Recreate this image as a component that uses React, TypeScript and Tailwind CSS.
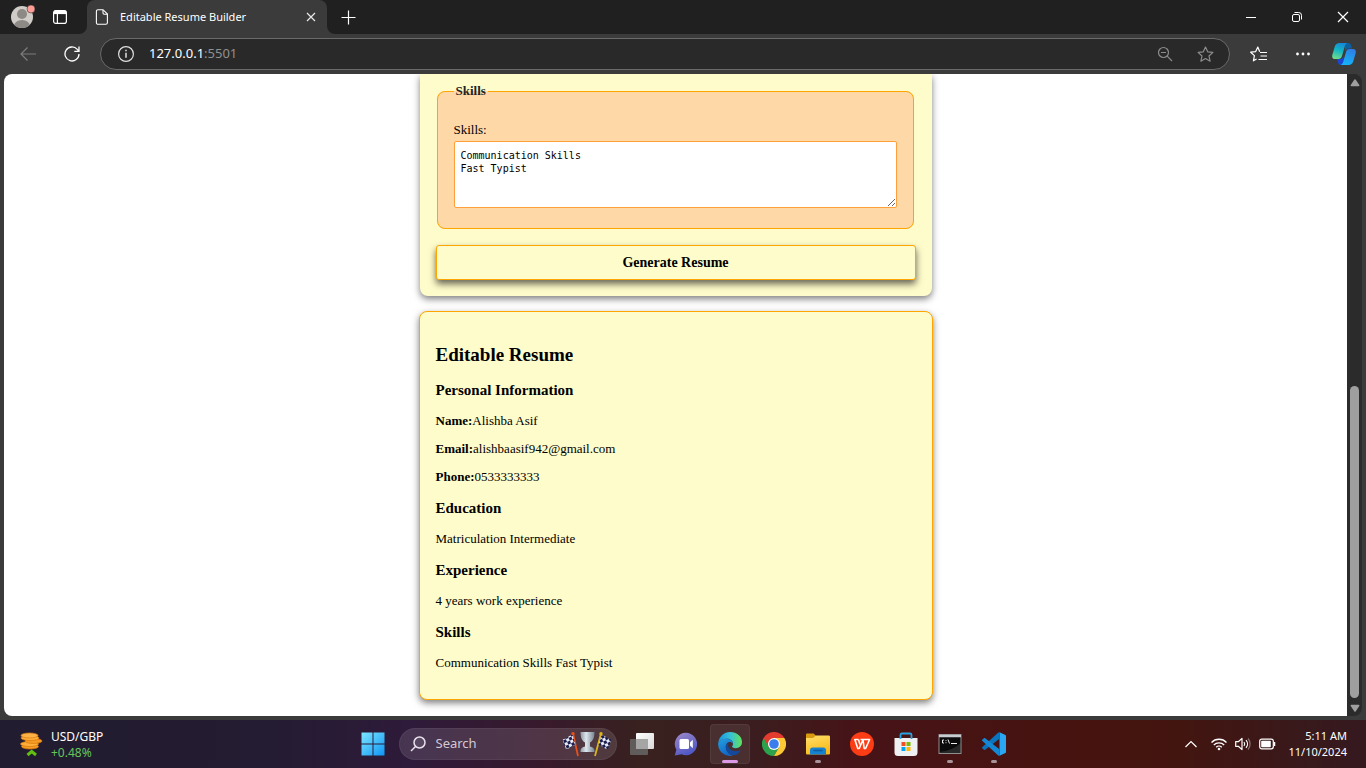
import type { ReactNode } from 'react';

const resumeShadow = 'shadow-[0_3px_7px_rgba(0,0,0,0.5)]';

function Avatar() {
  return (
    <svg width="24" height="24" viewBox="0 0 24 24">
      <circle cx="11" cy="13" r="11" fill="#d0cdc8" />
      <clipPath id="avatar">
        <circle cx="11" cy="13" r="11" />
      </clipPath>
      <g clipPath="url(#avatar)">
        <circle cx="11" cy="10" r="5" fill="#8d8984" />
        <ellipse cx="11" cy="22" rx="8" ry="6" fill="#8d8984" />
      </g>
      <circle cx="20" cy="5" r="4" fill="#ff9d97" stroke="#202020" strokeWidth="0.5" />
    </svg>
  );
}

function TabFlare({ side }: { side: 'left' | 'right' }) {
  return (
    <svg
      width="8"
      height="8"
      viewBox="0 0 8 8"
      className={side === 'left' ? 'absolute bottom-0 -left-2' : 'absolute bottom-0 -right-2'}
    >
      <path d={side === 'left' ? 'M8 0v8H0a8 8 0 0 0 8-8z' : 'M0 0v8h8a8 8 0 0 1-8-8z'} fill="#3b3b3b" />
    </svg>
  );
}

function TitleBar() {
  return (
    <header className="flex h-[34px] shrink-0 items-center bg-[#202020] text-white">
      <button aria-label="Profile" className="ml-[11px] flex h-8 w-6 items-start pt-[3px]">
        <Avatar />
      </button>
      <button aria-label="Tab actions" className="ml-[17px] flex h-8 w-4 items-center justify-center">
        <svg width="16" height="16" viewBox="0 0 16 16" fill="none" stroke="#fff" strokeWidth="1.2">
          <rect x="1.6" y="1.6" width="12.8" height="12.8" rx="2.2" />
          <path d="M2 3.4h12" strokeWidth="3.4" />
          <path d="M5.4 5v9.4" />
        </svg>
      </button>
      <div className="relative ml-[19px] flex h-full w-60 items-center rounded-t-lg bg-[#3b3b3b] pl-2 pr-2">
        <TabFlare side="left" />
        <svg width="14" height="16" viewBox="0 0 14 16" fill="none" stroke="#fff" strokeWidth="1.1">
          <path d="M3 .7h5l4.4 4.4v8.6c0 1-.7 1.6-1.6 1.6H3c-.9 0-1.6-.7-1.6-1.6V2.3C1.4 1.4 2.1.7 3 .7z" />
          <path d="M8 .9v3.2c0 .8.4 1.2 1.2 1.2h3.2" />
        </svg>
        <span className="ml-[11px] grow font-['Noto_Sans','Open_Sans',sans-serif] text-[11px] whitespace-nowrap">
          Editable Resume Builder
        </span>
        <button aria-label="Close tab" className="flex size-4 items-center justify-center">
          <svg width="10" height="10" viewBox="0 0 10 10" stroke="#e8e8e8" strokeWidth="1.2">
            <path d="M1 1l8 8M9 1l-8 8" />
          </svg>
        </button>
        <TabFlare side="right" />
      </div>
      <button aria-label="New tab" className="ml-[13px] flex size-4 items-center justify-center">
        <svg width="16" height="16" viewBox="0 0 16 16" stroke="#fff" strokeWidth="1.2">
          <path d="M8.5 1.500v14M1.500 8.500h14" />
        </svg>
      </button>
      <div className="ml-auto flex h-full">
        <button aria-label="Minimize" className="flex w-[46px] items-center justify-center">
          <svg width="10" height="10" viewBox="0 0 10 10" stroke="#fff">
            <path d="M0 5.500h10" />
          </svg>
        </button>
        <button aria-label="Restore" className="flex w-[46px] items-center justify-center">
          <svg width="12" height="12" viewBox="0 0 12 12" fill="none" stroke="#fff">
            <rect x="1.500" y="3.500" width="7" height="7" rx="1.500" />
            <path d="M3.500 1.500h4.200a2.800 2.800 0 0 1 2.800 2.800v4.200" />
          </svg>
        </button>
        <button aria-label="Close window" className="flex w-[46px] items-center justify-center">
          <svg width="12" height="12" viewBox="0 0 12 12" stroke="#fff" strokeWidth="1.200">
            <path d="M1 1l10 10M11 1L1 11" />
          </svg>
        </button>
      </div>
    </header>
  );
}

const starPath = 'M8.500 1l2.200 4.800 5.200.600-3.900 3.600 1.100 5.200-4.600-2.600-4.600 2.600 1.100-5.200L1.100 6.400l5.200-.600z';

function Copilot() {
  return (
    <svg width="24" height="24" viewBox="0 0 24 24">
      <defs>
        <linearGradient id="cpA" x1="0.6" y1="0" x2="0.3" y2="1">
          <stop offset="0" stopColor="#1687d9" />
          <stop offset="0.45" stopColor="#12b4c4" />
          <stop offset="1" stopColor="#6fdc8c" />
        </linearGradient>
        <linearGradient id="cpB" x1="0.6" y1="0" x2="0.3" y2="1">
          <stop offset="0" stopColor="#2f7fe6" />
          <stop offset="1" stopColor="#12b5f8" />
        </linearGradient>
      </defs>
      <path d="M12 1h4.500c1.500 0 2.300 1 2.700 2.400L20 6.500h-3c-2 0-3 1-3.600 3z" fill="#0d5f9e" />
      <path d="M12 23H8.500c-1.500 0-2.200-1-2.500-2.200L5 17h3.500c1.500 0 2.400-1 3-3z" fill="#1b46d4" />
      <path d="M7.500 1h8c-1.600.3-2.300 1.600-2.800 3.400L10 14c-.6 2-1.700 3-3.500 3H3C.8 17-.2 15.400.3 13L2.800 4.500C3.500 2.200 5 1 7.500 1z" fill="url(#cpA)" />
      <path d="M16.500 23h-8c1.600-.3 2.300-1.600 2.800-3.400L14 10c.6-2 1.700-3 3.500-3H21c2.200 0 3.200 1.600 2.700 4l-2.500 8.500c-.7 2.300-2.200 3.500-4.700 3.500z" fill="url(#cpB)" />
    </svg>
  );
}

function Toolbar() {
  return (
    <nav className="flex h-10 shrink-0 items-center bg-[#3b3b3b]">
      <button aria-label="Back" className="ml-5 flex size-4 items-center justify-center">
        <svg width="16" height="16" viewBox="0 0 16 16" fill="none" stroke="#7c7c7c" strokeWidth="1.200">
          <path d="M16 8H1M7.500 1.500L1 8l6.500 6.500" />
        </svg>
      </button>
      <button aria-label="Reload" className="ml-7 flex size-4 items-center justify-center">
        <svg width="16" height="16" viewBox="0 0 16 16" fill="none" stroke="#fff" strokeWidth="1.300">
          <path d="M15 8a7 7 0 1 1-1.700-4.600L15 5.200M15 .6v4.700h-4.700" />
        </svg>
      </button>
      <div className="ml-5 flex h-8 grow items-center rounded-full border border-[#6a6a6a] bg-[#292929] pr-[15px] pl-4">
        <svg width="18" height="18" viewBox="0 0 18 18" fill="none" stroke="#e0e0e0" strokeWidth="1.200">
          <circle cx="9" cy="9" r="7.400" />
          <path d="M9 7.800v5" strokeWidth="1.500" />
          <path d="M9 4.800v1.500" strokeWidth="1.500" />
        </svg>
        <a
          href="#resume"
          className="ml-[14px] font-['Noto_Sans','Open_Sans',sans-serif] text-[13px] text-[#909090]"
        >
          <span className="text-white">127.0.0.1</span>:5501
        </a>
        <button aria-label="Zoom" className="ml-auto flex size-4 items-center justify-center">
          <svg width="16" height="16" viewBox="0 0 16 16" fill="none" stroke="#8c8c8c" strokeWidth="1.200">
            <circle cx="6.500" cy="6.500" r="5" />
            <path d="M10.200 10.200L15 15M4 6.500h5" />
          </svg>
        </button>
        <button aria-label="Add to favorites" className="ml-6 flex size-[17px] items-center justify-center">
          <svg width="17" height="17" viewBox="0 0 17 17" fill="none" stroke="#8c8c8c" strokeWidth="1.200" strokeLinejoin="round">
            <path d={starPath} />
          </svg>
        </button>
      </div>
      <button aria-label="Favorites" className="ml-5 flex h-4 w-[17px] items-center justify-center">
        <svg width="17" height="17" viewBox="0 0 17 17" fill="none" stroke="#fff" strokeWidth="1.200" strokeLinejoin="round">
          <path d="M9.700 5.800L7.800 1 5.700 5.600.7 6.200l3.700 3.400-1 5.200 3.200-1.800M10 6.500h7M10.500 10h6.500M8.500 13.500H17" />
        </svg>
      </button>
      <button aria-label="Settings and more" className="ml-7 flex size-4 items-center justify-center">
        <svg width="16" height="4" viewBox="0 0 16 4" fill="#fff">
          <circle cx="2.500" cy="2" r="1.400" />
          <circle cx="8" cy="2" r="1.400" />
          <circle cx="13.500" cy="2" r="1.400" />
        </svg>
      </button>
      <button aria-label="Copilot" className="mr-[10px] ml-[21px] flex size-6 items-center justify-center">
        <Copilot />
      </button>
    </nav>
  );
}

function SkillsForm() {
  return (
    <form
      className={`w-full max-w-[512px] rounded-b-lg bg-[#fffccb] px-4 pt-[9px] pb-4 ${resumeShadow}`}
      onSubmit={(e) => e.preventDefault()}
    >
      <fieldset className="mr-0.5 ml-px rounded-lg border border-[#ffa500] bg-[#ffd8a8] px-4 pb-5">
        <legend className="px-[2px] text-[13px] leading-4 font-bold text-[#222]">Skills</legend>
        <label htmlFor="skills" className="mt-[23px] block text-[13px] leading-4">
          Skills:
        </label>
        <textarea
          id="skills"
          defaultValue={'Communication Skills\nFast Typist'}
          className="mt-[3px] block h-[67px] w-full resize rounded-xs border border-[#ffa03c] bg-white px-[6px] py-[7px] font-['DejaVu_Sans_Mono',monospace] text-[10px] leading-[13px]"
        />
      </fieldset>
      <button
        type="submit"
        className="mt-4 block h-[35px] w-full rounded-[3px] border border-[#ffa500] bg-[#fffccb] text-[14px] font-bold shadow-[0_4px_7px_rgba(0,0,0,0.6)]"
      >
        Generate Resume
      </button>
    </form>
  );
}

function Heading({ children }: { children: ReactNode }) {
  return <h3 className="my-[14px] text-[15px] leading-[18px] font-bold">{children}</h3>;
}

function Line({ label, children }: { label?: string; children: ReactNode }) {
  return (
    <p className="my-3 text-[13px] leading-4">
      {label && <strong>{label}</strong>}
      {children}
    </p>
  );
}

function Resume() {
  return (
    <section
      id="resume"
      className={`mt-[15px] w-full max-w-[514px] rounded-lg border border-[#ffa500] bg-[#fffccb] px-4 pt-[31px] pb-4 ${resumeShadow}`}
    >
      <h2 className="text-[19px] leading-6 font-bold">Editable Resume</h2>
      <Heading>Personal Information</Heading>
      <Line label="Name:">Alishba Asif</Line>
      <Line label="Email:">alishbaasif942@gmail.com</Line>
      <Line label="Phone:">0533333333</Line>
      <Heading>Education</Heading>
      <Line>Matriculation Intermediate</Line>
      <Heading>Experience</Heading>
      <Line>4 years work experience</Line>
      <Heading>Skills</Heading>
      <Line>Communication Skills Fast Typist</Line>
    </section>
  );
}

function ScrollBar() {
  return (
    <div className="flex w-[15px] shrink-0 flex-col items-center bg-[#2b2b2b] pt-[5px] pb-1">
      <svg width="10" height="8" viewBox="0 0 10 8" fill="#9f9f9f">
        <path d="M4.200.7a1 1 0 0 1 1.600 0L9.300 6c.4.700 0 1.300-.8 1.300h-7C.7 7.300.300 6.700.7 6z" />
      </svg>
      <div className="flex w-full grow flex-col items-center justify-end pb-[6px]">
        <div className="h-[51%] w-[9px] rounded-full bg-[#9f9f9f]" />
      </div>
      <svg width="10" height="8" viewBox="0 0 10 8" fill="#9f9f9f">
        <path d="M4.200 7.300a1 1 0 0 0 1.600 0L9.300 2c.4-.7 0-1.300-.8-1.300h-7C.7.7.300 1.300.7 2z" />
      </svg>
    </div>
  );
}

function Trophy() {
  return (
    <svg className="shrink-0" width="50" height="26" viewBox="0 0 50 26">
      <defs>
        <linearGradient id="cup" x1="0" x2="1">
          <stop offset="0" stopColor="#8b98a5" />
          <stop offset="0.4" stopColor="#dfe7ee" />
          <stop offset="1" stopColor="#75828f" />
        </linearGradient>
        <pattern id="check" width="6" height="6" patternUnits="userSpaceOnUse" patternTransform="rotate(-25)">
          <rect width="6" height="6" fill="#e9eaf3" />
          <rect width="3" height="3" fill="#1b2050" />
          <rect x="3" y="3" width="3" height="3" fill="#1b2050" />
        </pattern>
      </defs>
      <path d="M18.500 1h14c0 5-1 8.500-4.500 10.500v4c2.500.5 4 1.500 4.500 3.500v2h-14v-2c.5-2 2-3 4.500-3.500v-4C19.500 9.500 18.500 6 18.500 1z" fill="url(#cup)" />
      <path d="M11 2.500L16 25" stroke="#e8501c" strokeWidth="1.800" />
      <circle cx="11" cy="2.800" r="1.700" fill="#e8501c" />
      <path d="M10.500 4c-3 0-4.500 3-10 4.500L4 18c5-.5 6-4 9.500-4z" fill="url(#check)" />
      <path d="M39 2.500L33 25" stroke="#d9b41c" strokeWidth="1.800" />
      <circle cx="39" cy="2.800" r="1.700" fill="#d9b41c" />
      <path d="M39.500 4c3 0 4.500 3 10 4.500L46 18c-5-.5-6-4-9.500-4z" fill="url(#check)" />
    </svg>
  );
}

function TaskView() {
  return (
    <svg width="24" height="24" viewBox="0 0 24 24">
      <defs>
        <linearGradient id="tv" x2="1" y2="1">
          <stop stopColor="#fff" />
          <stop offset="1" stopColor="#d9d9d9" />
        </linearGradient>
      </defs>
      <rect x="6" y="1" width="18" height="16" rx="1" fill="url(#tv)" />
      <rect x="0" y="7" width="18" height="16" rx="1" fill="#6b6b6b" fillOpacity="0.8" />
      <path d="M6 7h12v10H6z" fill="#a5a5a5" />
    </svg>
  );
}

function Chat() {
  return (
    <svg width="24" height="24" viewBox="0 0 24 24">
      <defs>
        <linearGradient id="chat" x1="0.2" y1="0" x2="0.7" y2="1">
          <stop stopColor="#9a86c8" />
          <stop offset="1" stopColor="#4954c4" />
        </linearGradient>
      </defs>
      <path d="M12 .8a11.200 11.200 0 1 1-4.500 21.500L.8 23.500l1.600-5.800A11.200 11.200 0 0 1 12 .8z" fill="url(#chat)" />
      <rect x="5.500" y="7" width="9.500" height="10" rx="1.500" fill="#fff" />
      <path d="M16 10.500l2.800-2.800v8.600L16 13.500z" fill="#fff" />
    </svg>
  );
}

function Edge() {
  return (
    <svg width="24" height="24" viewBox="0 0 24 24">
      <defs>
        <linearGradient id="edgeA" x1="0" y1="0.3" x2="1" y2="0.3">
          <stop stopColor="#1a93da" />
          <stop offset="0.5" stopColor="#35c1d8" />
          <stop offset="1" stopColor="#62e25a" />
        </linearGradient>
        <linearGradient id="edgeB" x1="0" y1="0" x2="0.4" y2="1">
          <stop stopColor="#249fe0" />
          <stop offset="1" stopColor="#1168c6" />
        </linearGradient>
      </defs>
      <path d="M.2 11C1 4.500 6 0 12.200 0 19 0 24 4.500 24 10c0 4-3 6.200-6.200 6.200-2.800 0-3.800-.9-3.800-1.600 0-.6 1-1 1-2.900 0-2.500-2.400-4.900-6-4.900C4.500 6.800 1.400 8.800.2 11z" fill="url(#edgeA)" />
      <path d="M.1 12C.6 8.500 4.500 6.800 8.500 6.800c3.600 0 6.500 2.200 6.500 4.900-1-1.400-2.500-1.900-4-1.600-2 .5-3.500 2.800-3.200 5.500.4 4 3.400 7.200 7 8A12 12 0 0 1 .1 12z" fill="url(#edgeB)" />
      <path d="M10.500 10.200c-2 .8-3 3-2.700 5.400.5 4.500 4.400 8.400 9 7.500 2.400-.8 4.400-2.300 5.600-4.200.3-.5-.1-.9-.6-.6-4.300 2.200-10.800.3-11.600-4.300-.2-1.400 0-2.700.3-3.800z" fill="#12499c" />
    </svg>
  );
}

function Chrome() {
  return (
    <svg width="24" height="24" viewBox="0 0 24 24">
      <path d="M12 12L1.600 6A12 12 0 0 0 12 24l5.200-9z" fill="#2ba24c" />
      <path d="M12 12l5.200 3L12 24a12 12 0 0 0 10.400-18H12z" fill="#fcc934" />
      <path d="M1.600 6A12 12 0 0 1 22.400 6H12v6l-5.200 3z" fill="#e33b2e" />
      <circle cx="12" cy="12" r="6" fill="#fff" />
      <circle cx="12" cy="12" r="4.800" fill="#3b7ded" />
    </svg>
  );
}

function Explorer() {
  return (
    <svg width="24" height="24" viewBox="0 0 24 24">
      <defs>
        <linearGradient id="fold" x2="0.4" y2="1">
          <stop stopColor="#ffe06e" />
          <stop offset="1" stopColor="#f9bb18" />
        </linearGradient>
      </defs>
      <path d="M0 2.500C0 1.700.6 1.500 1.400 1.500h6.200L10 3.800V7H0z" fill="#d99a10" />
      <path d="M0 6h7l3-2.500h12.500c1 0 1.500.5 1.500 1.500v16c0 1-.500 1.500-1.500 1.500h-21C.5 22.500 0 22 0 21z" fill="url(#fold)" />
      <path d="M4 22.500v-4.500c0-1.500 1-2.500 2.500-2.500h11c1.500 0 2.500 1 2.500 2.500v4.500z" fill="#1682d0" />
      <path d="M8 18.500h8" stroke="#0e5e9f" strokeWidth="1.500" strokeLinecap="round" />
    </svg>
  );
}

function Wps() {
  return (
    <svg width="24" height="24" viewBox="0 0 24 24">
      <circle cx="12" cy="12" r="12" fill="#fb3c14" />
      <path
        d="M8.500 7.500H4.800l3 9h1.400L13 7.800l1.200 8.700h1.400l4-9h-9.100"
        fill="none"
        stroke="#fff"
        strokeWidth="1.600"
        strokeLinejoin="round"
      />
      <path d="M8.500 7.500l1.500 5" stroke="#fff" strokeWidth="1.600" />
    </svg>
  );
}

function Store() {
  return (
    <svg width="24" height="24" viewBox="0 0 24 24">
      <path d="M.5 6h23v14.500a3.500 3.500 0 0 1-3.500 3.500H4A3.500 3.500 0 0 1 .5 20.500z" fill="#eef0f2" />
      <path d="M6.500 7V3c0-1 .5-1.500 1.500-1.500h8c1 0 1.500.5 1.500 1.500v4" fill="none" stroke="#27a3e2" strokeWidth="1.800" />
      <path d="M7.500 10h4v4h-4z" fill="#f25022" />
      <path d="M12.500 10h4v4h-4z" fill="#7fba00" />
      <path d="M7.500 15h4v4h-4z" fill="#00a4ef" />
      <path d="M12.500 15h4v4h-4z" fill="#ffb900" />
    </svg>
  );
}

function Terminal() {
  return (
    <svg width="24" height="24" viewBox="0 0 24 24">
      <rect x="1" y="2.500" width="22" height="19" fill="#0b0b0b" stroke="#8e8e8e" />
      <path d="M1 4h22" stroke="#c9ccd0" strokeWidth="2.500" />
      <path d="M6 8H4.500v3H6M8 8.200v.9M8 10.300v.9M10 7.500l1.500 4M13 11.500h6" fill="none" stroke="#ececec" />
      <path d="M1.500 20C10 19 18 16 22.500 11v10h-21z" fill="#fff" fillOpacity="0.12" />
    </svg>
  );
}

function VsCode() {
  return (
    <svg width="24" height="24" viewBox="0 0 24 24">
      <path d="M17.500.2L23.400 3c.4.200.6.500.6 1v16c0 .5-.2.800-.6 1l-5.900 2.800z" fill="#2aa7f2" />
      <path d="M17.500.2v6.600L3.200 17.800c-.4.300-.8.300-1.200 0L.4 16.400c-.5-.5-.5-1 0-1.500L16 .7c.4-.4 1-.6 1.500-.5z" fill="#0a74bd" />
      <path d="M17.500 23.800v-6.600L3.200 6.200c-.4-.3-.8-.3-1.200 0L.4 7.600c-.5.500-.5 1 0 1.500L16 23.300c.4.400 1 .6 1.500.5z" fill="#1588d4" />
    </svg>
  );
}

type App = { name: string; icon: ReactNode; state?: 'active' | 'open' };

const apps: App[] = [
  { name: 'Task view', icon: <TaskView /> },
  { name: 'Chat', icon: <Chat /> },
  { name: 'Microsoft Edge', icon: <Edge />, state: 'active' },
  { name: 'Google Chrome', icon: <Chrome /> },
  { name: 'File Explorer', icon: <Explorer />, state: 'open' },
  { name: 'WPS Office', icon: <Wps /> },
  { name: 'Microsoft Store', icon: <Store /> },
  { name: 'Command Prompt', icon: <Terminal />, state: 'open' },
  { name: 'Visual Studio Code', icon: <VsCode />, state: 'open' },
];

function AppButton({ name, icon, state }: App) {
  return (
    <button aria-label={name} className="flex h-12 w-11 items-center justify-center">
      <span
        className={
          state === 'active'
            ? 'relative flex size-10 items-center justify-center rounded-sm border border-white/5 bg-white/8'
            : 'relative flex size-10 items-center justify-center'
        }
      >
        {icon}
        {state === 'active' && <span className="absolute bottom-0 h-[3px] w-4 rounded-full bg-[#dc9ae6]" />}
        {state === 'open' && <span className="absolute bottom-px h-[3px] w-[6px] rounded-full bg-[#a89498]" />}
      </span>
    </button>
  );
}

function Taskbar() {
  return (
    <footer className="grid h-12 shrink-0 grid-cols-[1fr_auto_1fr] items-center bg-[linear-gradient(90deg,#211c30_0%,#241c32_20%,#2e1a3a_30%,#381a2c_40%,#38211f_47%,#3b1d1f_55%,#471317_63%,#46130f_80%,#43150f_86%,#38191c_96%,#35191f_100%)] font-['Noto_Sans','Open_Sans',sans-serif] text-white">
      <button className="ml-5 flex items-center gap-2 justify-self-start pt-px text-left text-xs leading-4">
        <svg width="23" height="26" viewBox="0 0 23 26">
          <g stroke="#d97a0c" strokeWidth="0.700">
            <ellipse cx="10" cy="14.500" rx="8.500" ry="2.500" fill="#f59a23" />
            <ellipse cx="9.500" cy="12" rx="9" ry="2.500" fill="#ffae3b" />
            <ellipse cx="13.500" cy="9" rx="8.500" ry="2.500" fill="#f59a23" />
            <ellipse cx="10" cy="6" rx="9" ry="2.500" fill="#ffae3b" />
            <ellipse cx="9.500" cy="3.500" rx="8.500" ry="2.500" fill="#ffb347" />
          </g>
          <path d="M7.500 23l4.200-3.500L16 23" fill="none" stroke="#62bf12" strokeWidth="3" />
        </svg>
        <span>
          <span className="block">USD/GBP</span>
          <span className="block text-[#67c45b]">+0.48%</span>
        </span>
      </button>
      <div className="flex items-center">
        <button aria-label="Start" className="flex h-12 w-11 items-center justify-center">
          <svg width="24" height="24" viewBox="0 0 24 24">
            <linearGradient id="win" gradientUnits="userSpaceOnUse" x1="0" y1="0" x2="24" y2="24">
              <stop stopColor="#7fe9ff" />
              <stop offset="1" stopColor="#0c93f5" />
            </linearGradient>
            <path d="M.5.500h11v11H.5zM12.500.500h11v11h-11zM.5 12.500h11v11H.5zM12.500 12.500h11v11h-11z" fill="url(#win)" />
          </svg>
        </button>
        <label className="mr-[3px] ml-1 flex h-8 w-[218px] items-center rounded-full border border-white/5 bg-white/12 pr-1 pl-[10px]">
          <svg className="shrink-0" width="16" height="16" viewBox="0 0 16 16" fill="#ffffff18" stroke="#e9e2ec" strokeWidth="1.500">
            <circle cx="9.500" cy="6.500" r="5.500" />
            <path d="M5.500 10.500L1 15" />
          </svg>
          <input
            aria-label="Search"
            placeholder="Search"
            className="ml-[10px] w-0 min-w-0 grow bg-transparent text-[13px] outline-none placeholder:text-[#d3c8d4]"
          />
          <Trophy />
        </label>
        {apps.map((app) => (
          <AppButton key={app.name} {...app} />
        ))}
      </div>
      <div className="mr-[19px] flex items-center justify-self-end">
        <svg width="12" height="8" viewBox="0 0 12 8" fill="none" stroke="#fff" strokeWidth="1.200">
          <path d="M.5 7L6 1.500 11.500 7" />
        </svg>
        <svg className="ml-[14px]" width="16" height="14" viewBox="0 0 16 14" fill="none" stroke="#fff" strokeWidth="1.300">
          <path d="M.5 5.500a10.300 10.300 0 0 1 15 0M2.800 8a7.200 7.200 0 0 1 10.400 0M5.200 10.200a4 4 0 0 1 5.600 0" />
          <circle cx="8" cy="12" r="1.300" fill="#fff" stroke="none" />
        </svg>
        <svg className="ml-2" width="16" height="14" viewBox="0 0 16 14" fill="none" stroke="#fff" strokeWidth="1.200" strokeLinejoin="round">
          <path d="M.7 4.700h2.600L7 1.400v11.200L3.300 9.300H.7z" />
          <path d="M9 5c.9 1.200.9 2.800 0 4M11 3.200c2 2.200 2 5.400 0 7.600" />
          <path d="M13 1.500c2.800 3.200 2.800 7.800 0 11" stroke="#8a7272" />
        </svg>
        <svg className="ml-2" width="17" height="12" viewBox="0 0 17 12">
          <rect x="0.700" y="1.200" width="13.600" height="9.600" rx="2" fill="none" stroke="#fff" strokeWidth="1.200" />
          <rect x="2.200" y="2.700" width="9.600" height="6.600" rx="0.800" fill="#fff" />
          <path d="M15.500 4v4" stroke="#fff" strokeWidth="1.500" />
        </svg>
        <div className="ml-3 text-right text-[11px] leading-4">
          <div>5:11 AM</div>
          <div>11/10/2024</div>
        </div>
      </div>
    </footer>
  );
}

export default function App() {
  return (
    <div className="flex h-screen flex-col overflow-hidden bg-[#3b3b3b]">
      <TitleBar />
      <Toolbar />
      <div className="mx-1 mb-1 flex min-h-0 grow overflow-hidden rounded-lg">
        <main className="flex min-w-0 grow flex-col items-center overflow-hidden bg-white font-['Liberation_Serif',serif] text-black">
          <SkillsForm />
          <Resume />
        </main>
        <ScrollBar />
      </div>
      <Taskbar />
    </div>
  );
}
